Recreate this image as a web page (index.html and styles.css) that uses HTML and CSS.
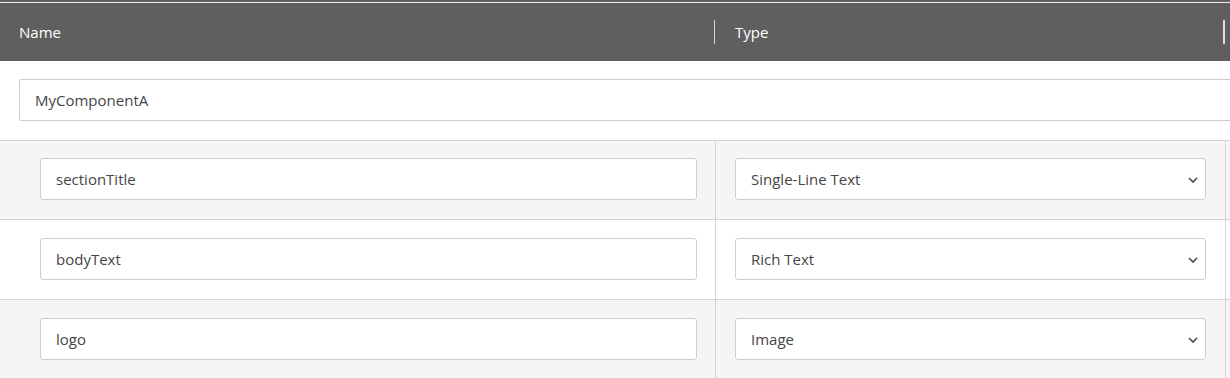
FILE: index.html
```html
<!DOCTYPE html>
<html lang="en">
<head>
  <meta charset="UTF-8">
  <title>Component Fields</title>
  <link rel="stylesheet" href="styles.css">
</head>
<body>
  <div class="field-table">
    <div class="table-head">
      <div class="th th-name">Name</div>
      <div class="th-sep"></div>
      <div class="th th-type">Type</div>
      <div class="th-sep th-sep-end"></div>
    </div>

    <div class="component-row">
      <input class="form-control component-name" type="text" value="MyComponentA">
    </div>

    <div class="field-row alt first">
      <div class="cell cell-name">
        <input class="form-control" type="text" value="sectionTitle">
      </div>
      <div class="cell cell-type">
        <div class="select-wrap">
          <select class="form-control">
            <option selected>Single-Line Text</option>
            <option>Rich Text</option>
            <option>Image</option>
          </select>
          <svg class="chevron" width="10" height="6" viewBox="0 0 10 6"><path d="M1 1l4 4 4-4" fill="none" stroke="#444" stroke-width="1.6"/></svg>
        </div>
      </div>
    </div>

    <div class="field-row">
      <div class="cell cell-name">
        <input class="form-control" type="text" value="bodyText">
      </div>
      <div class="cell cell-type">
        <div class="select-wrap">
          <select class="form-control">
            <option>Single-Line Text</option>
            <option selected>Rich Text</option>
            <option>Image</option>
          </select>
          <svg class="chevron" width="10" height="6" viewBox="0 0 10 6"><path d="M1 1l4 4 4-4" fill="none" stroke="#444" stroke-width="1.6"/></svg>
        </div>
      </div>
    </div>

    <div class="field-row alt">
      <div class="cell cell-name">
        <input class="form-control" type="text" value="logo">
      </div>
      <div class="cell cell-type">
        <div class="select-wrap">
          <select class="form-control">
            <option>Single-Line Text</option>
            <option>Rich Text</option>
            <option selected>Image</option>
          </select>
          <svg class="chevron" width="10" height="6" viewBox="0 0 10 6"><path d="M1 1l4 4 4-4" fill="none" stroke="#444" stroke-width="1.6"/></svg>
        </div>
      </div>
    </div>
  </div>
</body>
</html>
```

FILE: styles.css
```css
:root {
  --head-bg: #5f5f5f;
  --row-alt: #f5f5f5;
  --line: #d4d4d4;
  --input-border: #cdcdcd;
  --text: #464646;
}

* {
  box-sizing: border-box;
  margin: 0;
  padding: 0;
}

body {
  font-family: 'Open Sans', 'Liberation Sans', sans-serif;
  font-size: 15px;
  color: var(--text);
  background: #fff;
  overflow: hidden;
}

.field-table {
  border-top: 2px solid var(--head-bg);
}

.table-head {
  display: flex;
  align-items: center;
  height: 59px;
  background: var(--head-bg);
  border-top: 1px solid #ececec;
  color: #fff;
}

.th-name {
  width: 714px;
  padding-left: 19px;
}

.th-type {
  width: 508px;
  padding-left: 20px;
}

.th-sep {
  width: 1px;
  height: 24px;
  background: #d8d8d8;
}

.th-sep-end {
  width: 2px;
  background: #e0e0e0;
}

.form-control {
  display: block;
  width: 100%;
  height: 42px;
  padding: 0 15px;
  border: 1px solid var(--input-border);
  border-radius: 3px;
  background: #fff;
  font-family: inherit;
  font-size: 15px;
  color: var(--text);
  outline: none;
}

.component-row {
  height: 80px;
  padding: 18px 0 0 19px;
  border-bottom: 1px solid var(--line);
}

/* the name box runs on past the right edge of the view */
.component-name {
  border-right: none;
  border-radius: 3px 0 0 3px;
}

.field-row {
  display: flex;
  align-items: flex-start;
  height: 80px;
  padding-top: 18px;
  border-bottom: 1px solid var(--line);
  background: #fff;
}

.field-row.first {
  height: 79px;
  padding-top: 17px;
}

.field-row.alt {
  background: var(--row-alt);
}

.cell {
  display: flex;
  align-items: flex-start;
  align-self: stretch;
  margin-top: -18px;
  padding-top: 18px;
  border-right: 1px solid var(--line);
}

.field-row.first .cell {
  margin-top: -17px;
  padding-top: 17px;
}

.cell-name {
  width: 716px;
  padding-right: 18px;
  padding-left: 40px;
}

.cell-type {
  width: 510px;
  padding-right: 19px;
  padding-left: 19px;
}

.select-wrap {
  position: relative;
  width: 100%;
}

.select-wrap select {
  appearance: none;
  -webkit-appearance: none;
  padding-right: 32px;
}

.chevron {
  position: absolute;
  right: 8px;
  top: 19px;
  pointer-events: none;
}
```
